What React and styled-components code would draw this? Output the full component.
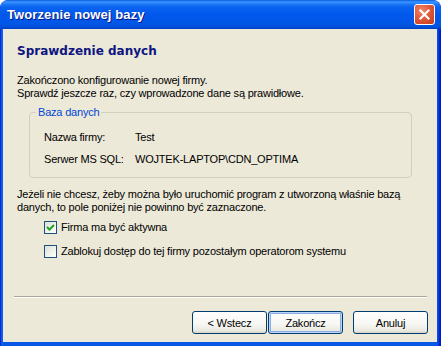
import React from "react";
import styled, { createGlobalStyle } from "styled-components";

const Global = createGlobalStyle`
  html, body { margin: 0; padding: 0; background: #ffffff; }
  body { font-family: "Liberation Sans", Arial, sans-serif; font-size: 11px; color: #000; letter-spacing: -0.2px; }
  * { box-sizing: border-box; }
`;

const Frame = styled.div`
  width: 441px;
  height: 346px;
  display: flex;
  flex-direction: column;
  border-radius: 8px 8px 0 0;
  background: linear-gradient(to right, #0019CF 0px, #0842E6 1px, #166AEE 2px, #0858E8 3px, #0858E8 437px, #0848E0 438px, #0019CF 440px);
  overflow: hidden;
`;

const TitleBar = styled.div`
  height: 29px;
  flex: none;
  display: flex;
  align-items: center;
  justify-content: space-between;
  padding: 0 7px 1px 7px;
  background: linear-gradient(to bottom, #0A5FE0 0%, #3C95FF 7%, #1D79F8 14%, #0A63F0 25%, #0058EC 50%, #0056E6 80%, #0052DC 92%, #003FC0 100%);
  border-radius: 8px 8px 0 0;
`;

const Title = styled.span`
  color: #ffffff;
  font-family: "Liberation Sans", Arial, sans-serif;
  font-weight: bold;
  font-size: 13px;
  text-shadow: 1px 1px 0 #0A1883;
  letter-spacing: 0.1px;
`;

const CloseButton = styled.div`
  width: 21px;
  height: 21px;
  margin-top: 1px;
  margin-right: -1px;
  border: 1px solid #ffffff;
  border-radius: 3px;
  background: radial-gradient(circle at 35% 30%, #F08A6A 0%, #E2583A 45%, #C43B1A 100%);
  display: flex;
  align-items: center;
  justify-content: center;
`;

const Body = styled.div`
  flex: 1;
  margin: 0 4px 4px 3px;
  background: #ECE9D8;
  display: flex;
  flex-direction: column;
  padding: 0 0 0 14px;
  position: relative;
`;

const Heading = styled.div`
  margin-top: 15px;
  height: 14px;
  line-height: 14px;
  font-family: "DejaVu Sans", Verdana, sans-serif;
  font-weight: bold;
  font-size: 12px;
  letter-spacing: 0;
  color: #0F1580;
`;

const Paragraph = styled.div`
  margin-top: ${p => p.$top}px;
  line-height: 13px;
  font-size: 11px;
`;

const Group = styled.div`
  position: relative;
  margin-top: 12px;
  margin-left: 12px;
  width: 383px;
  border: 1px solid #D0D0BF;
  border-radius: 4px;
  padding: 18px 0 11px 14px;
  display: grid;
  grid-template-columns: 91px auto;
  row-gap: 9px;
  line-height: 13px;
`;

const Legend = styled.span`
  position: absolute;
  top: -7px;
  left: 6px;
  padding: 0 2px;
  background: #ECE9D8;
  color: #0046D5;
  line-height: 13px;
`;

const Cell = styled.span``;

const CheckList = styled.div`
  margin-top: 7px;
  margin-left: 27px;
  display: flex;
  flex-direction: column;
  gap: 11px;
`;

const CheckRow = styled.label`
  display: flex;
  align-items: center;
  gap: 4px;
  height: 13px;
  line-height: 13px;
`;

const Box = styled.span`
  width: 13px;
  height: 13px;
  flex: none;
  border: 1px solid #1C5180;
  background: linear-gradient(135deg, #DCDCD7 0%, #F0F0EA 50%, #FFFFFF 100%);
  display: flex;
  align-items: center;
  justify-content: center;
`;

const Spacer = styled.div`
  flex: 1;
`;

const Separator = styled.div`
  margin-left: -3px;
  width: 413px;
  height: 2px;
  border-top: 1px solid #ACA899;
  border-bottom: 1px solid #FFFFFF;
`;

const ButtonBar = styled.div`
  margin-top: 13px;
  margin-bottom: 8px;
  padding-right: 9px;
  display: flex;
  justify-content: flex-end;
`;

const Button = styled.div`
  width: 75px;
  height: 23px;
  margin-left: ${p => p.$gap}px;
  border: 1px solid #003C74;
  border-radius: 3px;
  background: linear-gradient(to bottom, #FFFFFF 0%, #F6F6F2 60%, #EAE8DE 90%, #D6D0C5 100%);
  display: flex;
  align-items: center;
  justify-content: center;
  font-size: 11px;
  box-shadow: ${p => p.$default ? "inset 0 0 0 1px #BCD4F6, inset 0 0 0 2px #89ADE4" : "none"};
`;

export default function App() {
  return (
    <>
      <Global />
      <Frame>
        <TitleBar>
          <Title>Tworzenie nowej bazy</Title>
          <CloseButton>
            <svg width="13" height="13" viewBox="0 0 13 13">
              <path d="M2.5 2.5 L10.5 10.5 M10.5 2.5 L2.5 10.5" stroke="#fff" strokeWidth="2.2" strokeLinecap="square" />
            </svg>
          </CloseButton>
        </TitleBar>
        <Body>
          <Heading>Sprawdzenie danych</Heading>
          <Paragraph $top={16}>
            Zakończono konfigurowanie nowej firmy.<br />
            Sprawdź jeszcze raz, czy wprowadzone dane są prawidłowe.
          </Paragraph>
          <Group>
            <Legend>Baza danych</Legend>
            <Cell>Nazwa firmy:</Cell>
            <Cell>Test</Cell>
            <Cell>Serwer MS SQL:</Cell>
            <Cell>WOJTEK-LAPTOP\CDN_OPTIMA</Cell>
          </Group>
          <Paragraph $top={10}>
            Jeżeli nie chcesz, żeby można było uruchomić program z utworzoną właśnie bazą<br />
            danych, to pole poniżej nie powinno być zaznaczone.
          </Paragraph>
          <CheckList>
            <CheckRow>
              <Box>
                <svg width="9" height="9" viewBox="0 0 9 9">
                  <path d="M1 4 L3.5 6.5 L8 2" fill="none" stroke="#21A121" strokeWidth="2" />
                </svg>
              </Box>
              Firma ma być aktywna
            </CheckRow>
            <CheckRow>
              <Box />
              Zablokuj dostęp do tej firmy pozostałym operatorom systemu
            </CheckRow>
          </CheckList>
          <Spacer />
          <Separator />
          <ButtonBar>
            <Button $gap={0}>&lt; Wstecz</Button>
            <Button $gap={1} $default>Zakończ</Button>
            <Button $gap={10}>Anuluj</Button>
          </ButtonBar>
        </Body>
      </Frame>
    </>
  );
}
